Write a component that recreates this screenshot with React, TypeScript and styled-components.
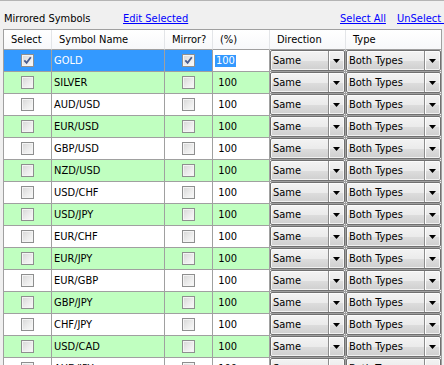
import React, { FC } from 'react';
import styled, { createGlobalStyle } from 'styled-components';

const GlobalStyle = createGlobalStyle`
  html, body {
    margin: 0;
    padding: 0;
    background: #f0f0f0;
    overflow: hidden;
  }
  body {
    font-family: Tahoma, "DejaVu Sans Condensed", "DejaVu Sans", sans-serif;
    font-size: 11px;
    color: #000;
  }
`;

const Panel = styled.div`
  width: 444px;
  height: 365px;
  overflow: hidden;
  background: #f0f0f0;
  border-top: 1px solid #b4b4b4;
  box-sizing: border-box;
`;

const TopBar = styled.div`
  display: flex;
  align-items: center;
  height: 22px;
  padding: 6px 0 0 4px;
  white-space: nowrap;
  overflow: hidden;
`;

const Title = styled.span`
  flex: 0 0 119px;
`;

const LinkText = styled.a<{ $width?: number }>`
  flex: 0 0 ${(p) => (p.$width ? `${p.$width}px` : 'auto')};
  color: #0000ff;
  text-decoration: underline;
  cursor: pointer;
`;

const Grid = styled.div`
  display: grid;
  grid-template-columns: 48px 113px 48px 57px 76px 96px;
  margin-left: 3px;
  width: 438px;
  border-left: 1px solid #a0a0a0;
  border-top: 1px solid #a0a0a0;
  background: #fff;
`;

const HeaderCell = styled.div<{ $last?: boolean }>`
  height: 19px;
  display: flex;
  align-items: center;
  padding-left: 7px;
  background: linear-gradient(#ffffff, #f7f8fa);
  border-right: 1px solid ${(p) => (p.$last ? '#a0a0a0' : '#e3e5e8')};
  border-bottom: 1px solid #a0a0a0;
  white-space: nowrap;
  overflow: hidden;
`;

const Cell = styled.div<{ $bg: string; $center?: boolean; $color?: string }>`
  height: 21px;
  display: flex;
  align-items: center;
  justify-content: ${(p) => (p.$center ? 'center' : 'flex-start')};
  padding-left: ${(p) => (p.$center ? '0' : '2px')};
  background: ${(p) => p.$bg};
  color: ${(p) => p.$color || '#000'};
  border-right: 1px solid #a0a0a0;
  border-bottom: 1px solid #a0a0a0;
  white-space: nowrap;
  overflow: hidden;
`;

const ComboCell = styled.div`
  height: 21px;
  background: #fff;
  border-right: 1px solid #a0a0a0;
  border-bottom: 1px solid #a0a0a0;
  display: flex;
`;

const Highlight = styled.span`
  background: #3399ff;
  color: #fff;
  padding: 0 1px;
  line-height: 12px;
`;

const Box = styled.span`
  width: 11px;
  height: 11px;
  border: 1px solid #8e8f8f;
  background: linear-gradient(135deg, #d6d6d6 0%, #ececec 55%, #fafafa 100%);
  box-shadow: inset 0 0 0 1px #f4f4f4;
  display: flex;
  align-items: center;
  justify-content: center;
`;

const Combo = styled.div`
  flex: 1;
  display: flex;
  border: 1px solid #707070;
  border-radius: 2px;
  background: linear-gradient(#f3f3f3 0%, #ebebeb 50%, #dddddd 51%, #cfcfcf 100%);
  box-shadow: inset 0 0 0 1px rgba(255, 255, 255, 0.7);
  overflow: hidden;
`;

const ComboText = styled.span`
  flex: 1;
  display: flex;
  align-items: center;
  padding-left: 2px;
  white-space: nowrap;
`;

const ComboButton = styled.span`
  flex: 0 0 15px;
  display: flex;
  align-items: center;
  justify-content: center;
  border-left: 1px solid #8c8c8c;
  box-shadow: inset 1px 0 0 #ffffff;
`;

const CheckBox: FC<{ checked?: boolean }> = ({ checked }) => (
  <Box>
    {checked && (
      <svg width="9" height="9" viewBox="0 0 9 9">
        <path d="M1.3 4.3 L3.6 6.8 L7.8 1.2" fill="none" stroke="#4a5d8f" strokeWidth="1.8" />
      </svg>
    )}
  </Box>
);

const Dropdown: FC<{ value: string }> = ({ value }) => (
  <ComboCell>
    <Combo>
      <ComboText>{value}</ComboText>
      <ComboButton>
        <svg width="7" height="4" viewBox="0 0 7 4">
          <polygon points="0,0 7,0 3.5,4" fill="#000" />
        </svg>
      </ComboButton>
    </Combo>
  </ComboCell>
);

const symbols = [
  'GOLD', 'SILVER', 'AUD/USD', 'EUR/USD', 'GBP/USD', 'NZD/USD', 'USD/CHF',
  'USD/JPY', 'EUR/CHF', 'EUR/JPY', 'EUR/GBP', 'GBP/JPY', 'CHF/JPY', 'USD/CAD', 'AUD/JPY',
];

const headers = ['Select', 'Symbol Name', 'Mirror?', '(%)', 'Direction', 'Type'];

const App: FC = () => (
  <>
    <GlobalStyle />
    <Panel>
      <TopBar>
        <Title>Mirrored Symbols</Title>
        <LinkText $width={217}>Edit Selected</LinkText>
        <LinkText $width={57}>Select All</LinkText>
        <LinkText>UnSelect All</LinkText>
      </TopBar>
      <Grid>
        {headers.map((h, i) => (
          <HeaderCell key={h} $last={i === headers.length - 1}>{h}</HeaderCell>
        ))}
        {symbols.map((s, i) => {
          const selected = i === 0;
          const bg = selected ? '#3399ff' : i % 2 === 1 ? '#c0ffc0' : '#ffffff';
          return (
            <React.Fragment key={s}>
              <Cell $bg={bg} $center>
                <CheckBox checked={selected} />
              </Cell>
              <Cell $bg={bg} $color={selected ? '#fff' : '#000'}>{s}</Cell>
              <Cell $bg={bg} $center>
                <CheckBox checked={selected} />
              </Cell>
              <Cell $bg={selected ? '#fff' : bg}>
                {selected ? <Highlight>100</Highlight> : <span>&nbsp;100</span>}
              </Cell>
              <Dropdown value="Same" />
              <Dropdown value="Both Types" />
            </React.Fragment>
          );
        })}
      </Grid>
    </Panel>
  </>
);

export default App;
